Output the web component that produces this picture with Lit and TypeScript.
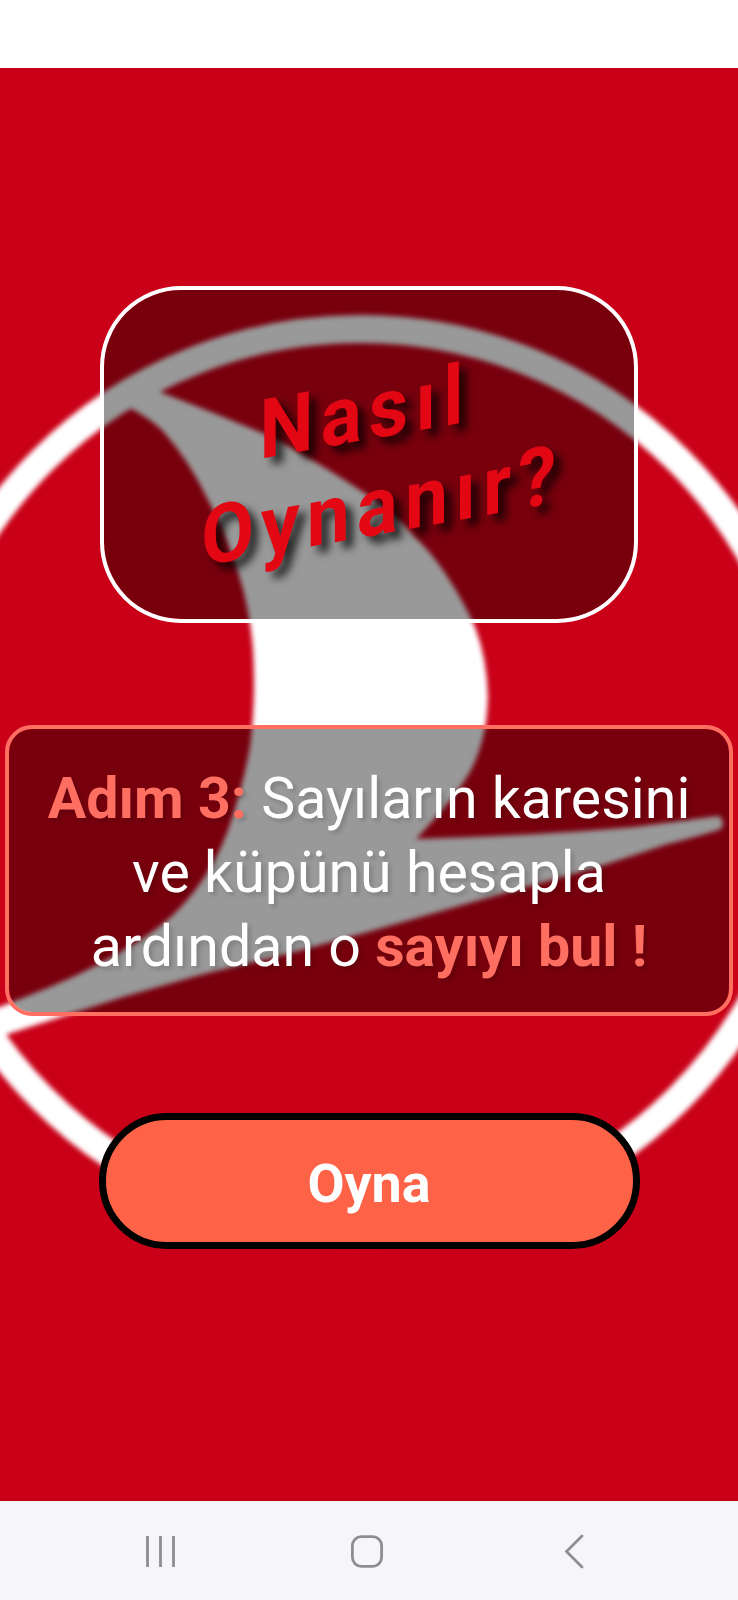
import { LitElement, html, css, svg } from "lit";
import { customElement, property } from "lit/decorators.js";

const FONT = css`Roboto, "Noto Sans", sans-serif`;

@customElement("emblem-backdrop")
class EmblemBackdrop extends LitElement {
  static styles = css`
    :host { display: block; height: 100%; background: #c90017; overflow: hidden; }
    .art { display: block; }
  `;
  render() {
    return html`<svg class="art" width="738" height="1433" viewBox="0 68 738 1433" aria-hidden="true">
      <defs><filter id="soft" x="-10%" y="-10%" width="120%" height="120%"><feGaussianBlur stdDeviation="2.4" /></filter></defs>
      <g filter="url(#soft)">
        <circle cx="360.5" cy="779.5" r="450.5" fill="none" stroke="#fff" stroke-width="28" />
        <path fill="#fff" d="M110 392 L157 391 Q200 407 267 435 Q315 460 363 492 Q392 512 411 533
          Q431 552 445 573 Q463 600 475 627 Q487 658 488 697 Q487 722 483 737 Q477 762 465 780 Q450 803 416 839
          Q530 836 635 827 L718 816 Q726 820 721 829 Q700 836 668 844 L598 867 L501 894 L368 932 L283 955 L200 975
          L123 997 L70 1014 L8 1034 L-12 1050 L-20 1012 L0 1007 L50 987 Q96 968 137 942 Q163 926 180 908
          Q211 875 227 833 Q241 795 250 747 Q256 700 253 650 Q249 600 234 561 Q223 527 208 500
          Q189 460 162 430 Q148 417 128 407 L95 430 Z" />
      </g>
    </svg>`;
  }
}

@customElement("nav-bar")
class NavBar extends LitElement {
  static styles = css`
    :host { display: flex; height: 99px; background: #f6f6f9; }
    .key { display: block; }
  `;
  render() {
    return html`<svg class="key" width="738" height="99" viewBox="0 1501 738 99" fill="none" stroke="#8e8e90" stroke-width="2.8" stroke-linecap="round" stroke-linejoin="round">
      ${[147.5, 160.5, 173.5].map((x) => svg`<path d="M${x} 1536V1567" stroke-linecap="butt" />`)}
      <rect x="352.4" y="1536.7" width="29.2" height="29.6" rx="9" />
      <path d="M582 1536L566.5 1551.5L582 1567" stroke-linejoin="miter" />
    </svg>`;
  }
}

@customElement("app-root")
class AppRoot extends LitElement {
  @property() heading = ["Nasıl", "Oynanır?"];

  static styles = css`
    :host { display: flex; flex-direction: column; width: 738px; height: 1600px; overflow: hidden; font-family: ${FONT}; background: #fff; }
    .status { height: 68px; flex: none; background: #fff; }
    .stage { display: grid; height: 1433px; flex: none; overflow: hidden; }
    .stage > * { grid-area: 1 / 1; min-width: 0; }
    .content { z-index: 1; display: flex; flex-direction: column; align-items: center; padding-top: 218px; }
    .title { box-sizing: border-box; width: 538px; height: 337px; border: 4px solid #fff; border-radius: 81px; background: rgba(0,0,0,.4); background-clip: padding-box; display: flex; align-items: center; justify-content: center; }
    .heading { margin: 0; transform: translate(13.5px, 1.8px) skewY(-10.1deg) scaleX(.93); color: #e30613; font-size: 82.5px; line-height: 97px; font-weight: 700; letter-spacing: 7.6px; text-align: center; text-shadow: 8px 8px 9px rgba(0,0,0,.75); }
    .row { display: block; white-space: nowrap; }
    .heading .row:first-child { padding-right: 37px; }
    .step { box-sizing: border-box; width: 728px; height: 291px; margin-top: 102px; border: 4px solid #ff6f61; border-radius: 27px; background: rgba(0,0,0,.4); background-clip: padding-box; padding-top: 32.5px; text-align: center; color: #fff; font-size: 57.3px; line-height: 74px; text-shadow: 3px 3px 4px rgba(0,0,0,.17); }
    .accent { color: #ff6f61; font-weight: 700; }
    .play { box-sizing: border-box; width: 541px; height: 136px; margin-top: 97px; border: 7px solid #000; border-radius: 68px; background: #ff6347; color: #fff; font: 700 53.8px/1 ${FONT}; padding: 6px 0 0; }
  `;
  render() {
    return html`
      <div class="status"></div>
      <main class="stage">
        <emblem-backdrop></emblem-backdrop>
        <div class="content">
          <section class="title"><h1 class="heading">${this.heading.map((t) => html`<span class="row">${t}</span>`)}</h1></section>
          <section class="step">
            <span class="row"><span class="accent">Adım 3:</span> Sayıların karesini</span>
            <span class="row">ve küpünü hesapla</span>
            <span class="row">ardından o <span class="accent">sayıyı bul !</span></span>
          </section>
          <button class="play">Oyna</button>
        </div>
      </main>
      <nav-bar></nav-bar>
    `;
  }
}
